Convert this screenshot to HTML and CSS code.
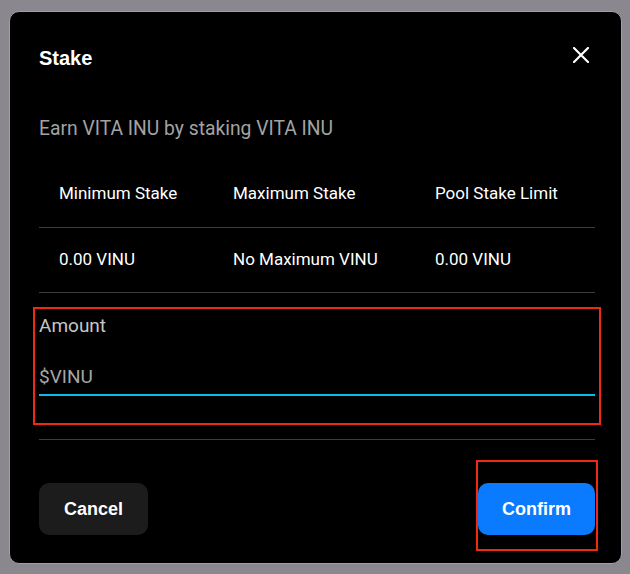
FILE: index.html
```html
<!DOCTYPE html>
<html lang="en">
  <head>
    <meta charset="UTF-8" />
    <meta name="viewport" content="width=device-width, initial-scale=1.0" />
    <title>Stake</title>
    <link rel="stylesheet" href="styles.css">
  </head>
  <body>
    <div class="modal">
      <div class="modal-head">
        <h2>Stake</h2>
        <button class="close" aria-label="Close">
          <svg width="16" height="16" viewBox="0 0 16 16">
            <path d="M1 1 L15 15 M15 1 L1 15" stroke="#fff" stroke-width="2.2" stroke-linecap="square" fill="none"/>
          </svg>
        </button>
      </div>

      <p class="subtitle">Earn VITA INU by staking VITA INU</p>

      <div class="limits">
        <div class="cell head">Minimum Stake</div>
        <div class="cell head">Maximum Stake</div>
        <div class="cell head">Pool Stake Limit</div>
        <div class="cell">0.00 VINU</div>
        <div class="cell">No Maximum VINU</div>
        <div class="cell">0.00 VINU</div>
      </div>

      <div class="field">
        <label for="amount">Amount</label>
        <input id="amount" type="text" placeholder="$VINU" />
      </div>

      <div class="actions">
        <button class="btn cancel">Cancel</button>
        <button class="btn confirm">Confirm</button>
      </div>
    </div>
  </body>
</html>
```

FILE: styles.css
```css
body {
  margin: 0;
  background-color: #8a878f;
  font-family: Roboto, "Liberation Sans", Arial, sans-serif;
}

.modal {
  box-sizing: border-box;
  width: 613px;
  height: 553px;
  margin: 11px 0 0 9px;
  padding: 34px 26px 0 29px;
  background-color: #000;
  border: 1px solid #a19ea6;
  border-radius: 10px;
}

.modal-head {
  display: flex;
  justify-content: space-between;
  align-items: flex-start;
}

.modal-head h2 {
  margin: 0;
  font-family: "Liberation Sans", Arial, sans-serif;
  font-size: 20px;
  line-height: 24px;
  font-weight: 700;
  color: #fff;
}

.close {
  margin: 1px 6px 0 0;
  padding: 0;
  border: none;
  background: none;
  width: 16px;
  height: 16px;
  cursor: pointer;
}

.close svg {
  display: block;
}

.subtitle {
  margin: 45px 0 0 0;
  font-size: 19.3px;
  line-height: 28px;
  color: #a3a3a3;
}

.limits {
  display: grid;
  grid-template-columns: 174px 202px 1fr;
  margin-top: 18px;
  color: #fff;
  font-size: 17px;
  line-height: 24px;
}

.cell {
  padding: 19px 20px 21px 20px;
  border-bottom: 1px solid #3c3c3c;
}

.cell.head {
  padding: 20px 20px 22px 20px;
}

.field {
  display: flex;
  flex-direction: column;
  margin-top: 20px;
  padding-bottom: 23px;
  outline: 2px solid #f02a12;
  outline-offset: 4px;
}

.field label {
  padding-top: 1px;
  font-size: 19px;
  line-height: 23px;
  color: #c6c6c6;
}

.field input {
  margin: 0;
  padding: 28px 0 6px 0;
  height: 23px;
  font-family: inherit;
  font-size: 19px;
  line-height: 23px;
  color: #fff;
  background: none;
  border: none;
  border-bottom: 2px solid #0cb8f2;
  outline: none;
}

.field input::placeholder {
  color: #a6a6a6;
}

.actions {
  display: flex;
  justify-content: space-between;
  margin-top: 20px;
  padding-top: 43px;
  border-top: 1px solid #3c3c3c;
}

.btn {
  height: 52px;
  padding: 0 24px;
  border: none;
  border-radius: 10px;
  font-family: "Liberation Sans", Arial, sans-serif;
  font-size: 18px;
  font-weight: 700;
  color: #fff;
  cursor: pointer;
}

.cancel {
  background-color: #1c1c1c;
  padding: 0 25px;
}

.confirm {
  position: relative;
  background-color: #0a7bff;
}

/* highlight frame round the confirm button */
.confirm::after {
  content: "";
  position: absolute;
  left: -2px;
  right: -3px;
  top: -23px;
  bottom: -16px;
  border: 2px solid #f02a12;
}
```
